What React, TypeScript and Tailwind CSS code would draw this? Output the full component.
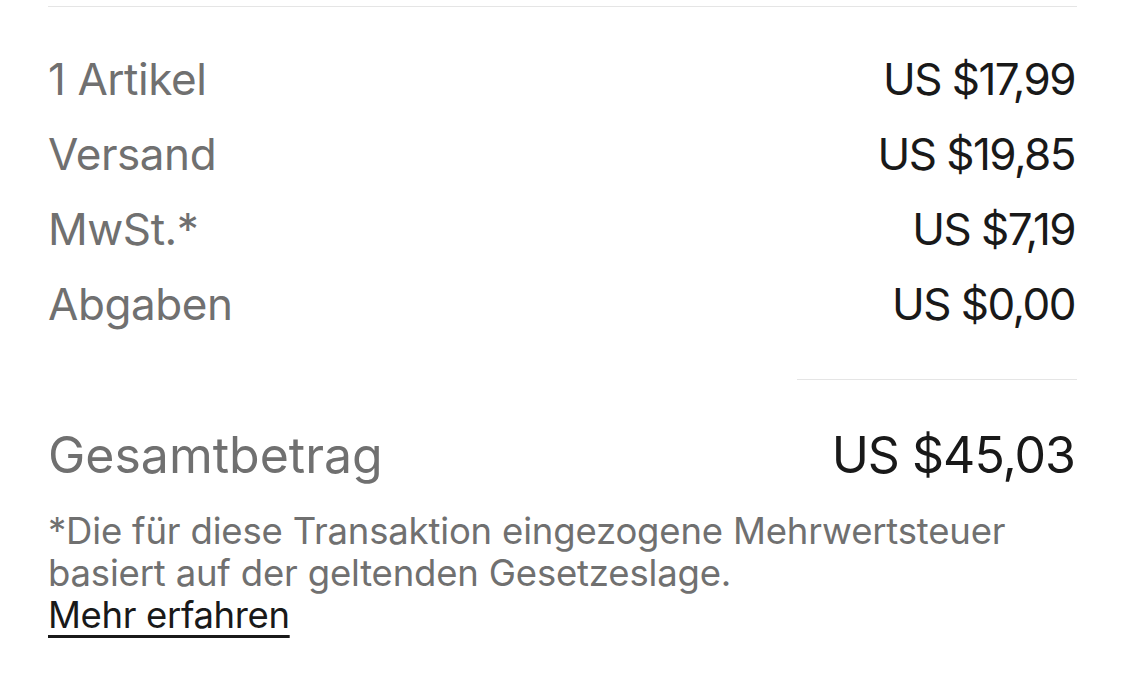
// Order summary (Bestellübersicht)

const rows = [
  { label: '1 Artikel', value: 'US $17,99' },
  { label: 'Versand', value: 'US $19,85' },
  { label: 'MwSt.*', value: 'US $7,19' },
  { label: 'Abgaben', value: 'US $0,00' },
];

export default function App() {
  return (
    <main className="min-h-screen bg-white px-12 font-['Inter',sans-serif] text-[#191919]">
      {/* top divider */}
      <div className="mt-[6px] h-px bg-[#e5e5e5]"></div>

      {/* line items */}
      <div className="mt-[35px]">
        {rows.map((row) => (
          <div key={row.label} className="flex items-center justify-between text-[44px] leading-[75px]">
            <span className="tracking-[-0.01em] text-[#707070]">{row.label}</span>
            <span className="pr-[2px] tracking-[-0.035em]">{row.value}</span>
          </div>
        ))}
      </div>

      {/* total */}
      <div className="mt-[37px] flex justify-end">
        <div className="h-px w-[280px] bg-[#e5e5e5]"></div>
      </div>
      <div className="mt-[45px] flex items-center justify-between text-[50px] leading-[60px]">
        <span className="text-[#707070]">Gesamtbetrag</span>
        <span className="pr-[2px] tracking-[-0.02em]">US $45,03</span>
      </div>

      {/* footnote */}
      <div className="mt-[25px] text-[36.5px] leading-[42px]">
        <p className="tracking-[-0.005em] text-[#707070]">
          *Die für diese Transaktion eingezogene Mehrwertsteuer
          <br />
          basiert auf der geltenden Gesetzeslage.
        </p>
        <a href="#" className="tracking-[-0.01em] text-[#191919] underline decoration-[3px] underline-offset-[7px]">
          Mehr erfahren
        </a>
      </div>
    </main>
  );
}
